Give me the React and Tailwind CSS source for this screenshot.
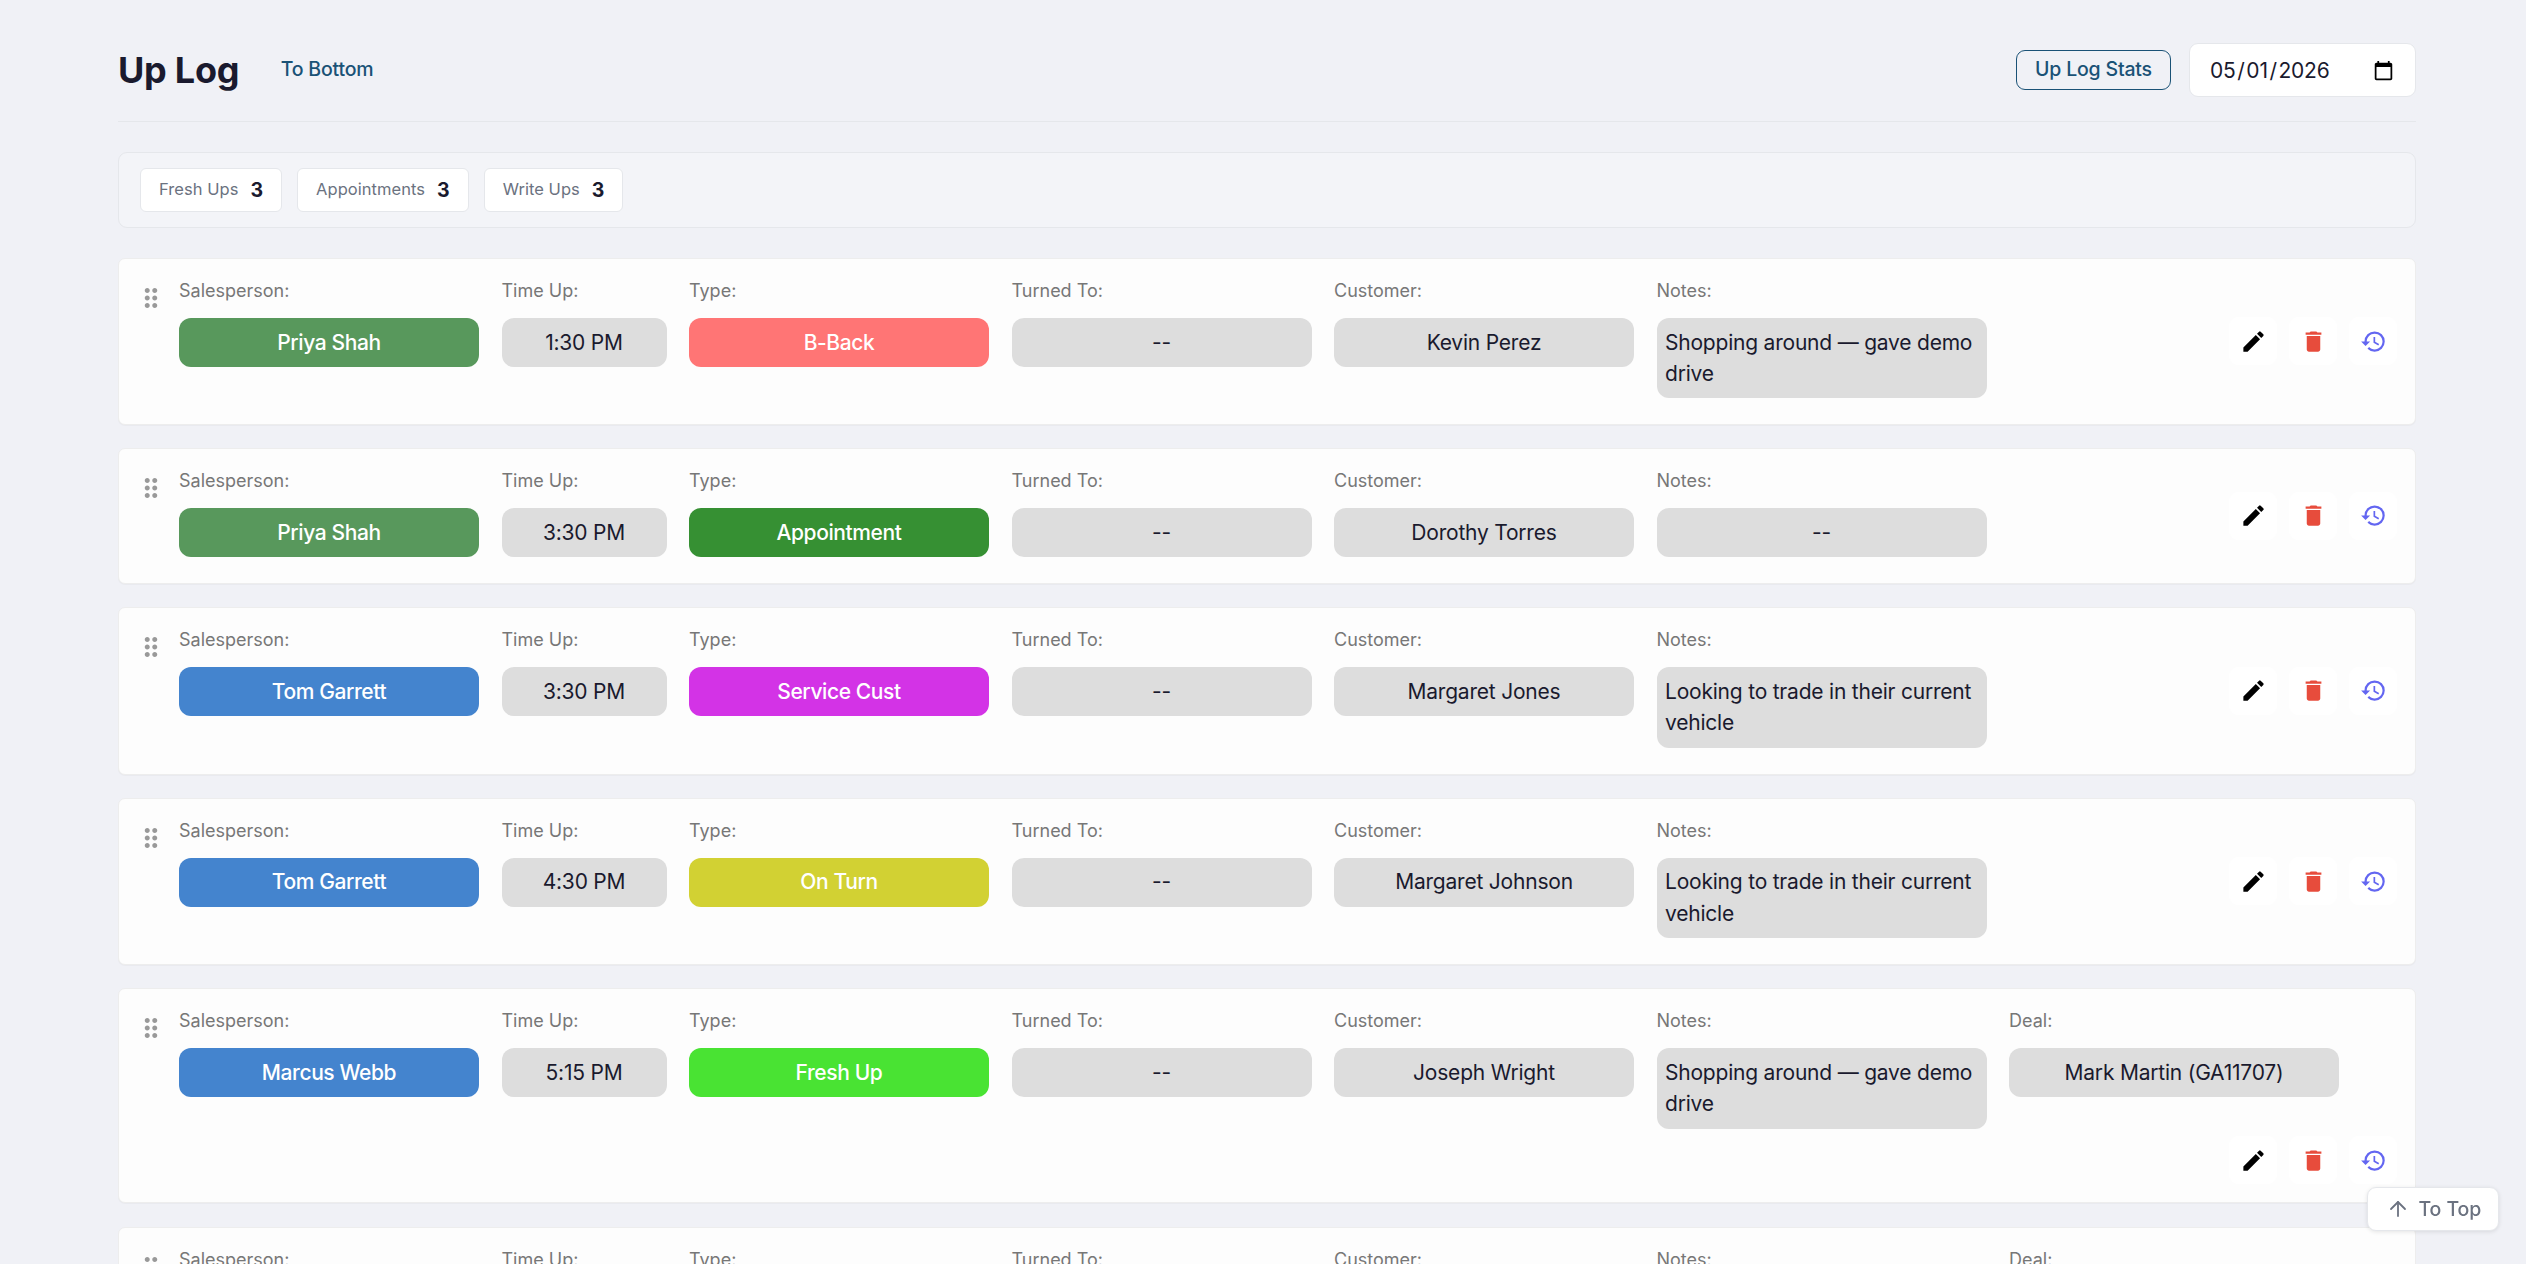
import React from "react";
import { MdDelete, MdDragIndicator, MdEdit, MdHistory } from "react-icons/md";
import { ArrowUp } from "lucide-react";

const stats = [
  { label: "Fresh Ups", value: 3 },
  { label: "Appointments", value: 3 },
  { label: "Write Ups", value: 3 },
];

const GREEN = "bg-[#58985c] text-white font-medium tracking-[-0.019em]";
const BLUE = "bg-[#4484ce] text-white font-medium tracking-[-0.019em]";
const GRAY = "bg-[#dddddd] tracking-[-0.01em]";

const entries = [
  { person: "Priya Shah", personTone: GREEN, time: "1:30 PM", type: "B-Back", typeTone: "bg-[#ff7575]", customer: "Kevin Perez", notes: "Shopping around — gave demo drive" },
  { person: "Priya Shah", personTone: GREEN, time: "3:30 PM", type: "Appointment", typeTone: "bg-[#369033]", customer: "Dorothy Torres", notes: "--" },
  { person: "Tom Garrett", personTone: BLUE, time: "3:30 PM", type: "Service Cust", typeTone: "bg-[#d333e6]", customer: "Margaret Jones", notes: "Looking to trade in their current vehicle" },
  { person: "Tom Garrett", personTone: BLUE, time: "4:30 PM", type: "On Turn", typeTone: "bg-[#d2d133]", customer: "Margaret Johnson", notes: "Looking to trade in their current vehicle" },
  { person: "Marcus Webb", personTone: BLUE, time: "5:15 PM", type: "Fresh Up", typeTone: "bg-[#49e333]", customer: "Joseph Wright", notes: "Shopping around — gave demo drive", deal: "Mark Martin (GA11707)" },
  { person: "--", personTone: GRAY, time: "--", type: "--", typeTone: "bg-[#dddddd]", customer: "--", notes: "--", deal: "--" },
];

function Field({ label, width = "w-[300px]", tone = GRAY, align = "text-center", children }) {
  return (
    <div className={`${width} shrink-0 pb-[7.7px]`}>
      <div className="text-[18px] leading-[27px] text-[#777777]">{label}</div>
      <div className={`mt-[14px] rounded-[12px] px-[8.5px] pt-[8.65px] pb-[8.85px] text-[21px] leading-[31.5px] ${align} ${tone}`}>
        {children}
      </div>
    </div>
  );
}

function IconButton({ label, children }) {
  return (
    <button aria-label={label} className="flex size-12 items-center justify-center rounded-[9px] bg-white">
      {children}
    </button>
  );
}

function EntryCard({ entry }) {
  return (
    <div className="flex rounded-[7px] border border-[#ededed] bg-[#fdfdfd] py-[18px] pr-[18px] pl-[17px] shadow-[0_1px_1px_rgba(0,0,0,0.03)]">
      <div className="w-[43px] shrink-0 pt-[6px]">
        <MdDragIndicator className="size-[30px] text-[#999999]" />
      </div>
      <div className="flex grow flex-wrap items-start gap-x-[22.5px]">
        <Field label="Salesperson:" tone={entry.personTone}>{entry.person}</Field>
        <Field label="Time Up:" width="w-[165px]">{entry.time}</Field>
        <Field label="Type:" tone={`${entry.typeTone} text-white font-medium tracking-[-0.019em]`}>{entry.type}</Field>
        <Field label="Turned To:">--</Field>
        <Field label="Customer:">{entry.customer}</Field>
        <Field label="Notes:" width="w-[330px]" align={entry.notes === "--" ? "text-center" : "text-left"}>{entry.notes}</Field>
        {entry.deal && <Field label="Deal:" width="w-[330px]">{entry.deal}</Field>}
        <div className="-mt-[0.3px] mb-[0.3px] ml-auto flex gap-3 self-center">
          <IconButton label="Edit"><MdEdit className="size-[27px] text-black" /></IconButton>
          <IconButton label="Delete"><MdDelete className="size-[27px] text-[#e74c3c]" /></IconButton>
          <IconButton label="History"><MdHistory className="size-[27px] text-[#6366f1]" /></IconButton>
        </div>
      </div>
    </div>
  );
}

export default function App() {
  return (
    <div className="h-screen overflow-hidden bg-[#f0f1f6] pt-[43px] pr-[110px] pl-[118px] font-['Inter',sans-serif] text-[#1a1a2e]">
      <header className="flex h-[79px] items-start justify-between border-b border-[#e5e7eb]">
        <div className="flex h-[54px] items-center">
          <h1 className="text-[36px] leading-[54px] font-bold tracking-[-0.007em]">Up Log</h1>
          <a className="-mt-[1px] ml-[41.5px] text-[19.5px] font-medium tracking-[-0.01em] text-[#1a5276]">To Bottom</a>
        </div>
        <div className="flex h-[54px] items-center gap-[18px]">
          <button className="h-10 w-[155px] rounded-[9px] border border-[#1a5276] pb-[2px] text-[19.5px] leading-[34px] font-medium tracking-[-0.01em] text-[#1a5276]">
            Up Log Stats
          </button>
          <div className="flex h-[54px] w-[227px] items-center justify-between rounded-[9px] border border-[#e5e7eb] bg-white pr-[21px] pl-[20px] text-[21px] tracking-[-0.01em]">
            <span className="flex pt-[2px]">
              <span>05</span><span className="px-[1.7px]">/</span><span>01</span><span className="px-[1.7px]">/</span><span>2026</span>
            </span>
            <svg viewBox="0 0 24 24" className="size-[21px] text-black" fill="currentColor">
              <path d="M20 3h-1V1h-2v2H7V1H5v2H4c-1.1 0-2 .9-2 2v16c0 1.1.9 2 2 2h16c1.1 0 2-.9 2-2V5c0-1.1-.9-2-2-2zm0 18H4V8h16v13z" />
            </svg>
          </div>
        </div>
      </header>

      <section className="mt-[30px] flex h-[76px] items-center gap-[15px] rounded-[9px] border border-[#e5e7eb] bg-[#f3f4f8] px-[21px]">
        {stats.map((stat) => (
          <div key={stat.label} className="flex h-[44px] items-center gap-3 rounded-[6px] border border-[#e5e7eb] bg-white px-[18px]">
            <span className="pb-[1px] text-[16.5px] tracking-[0.003em] text-[#6b7280]">{stat.label}</span>
            <span className="pt-[1px] text-[19.5px] font-bold">{stat.value}</span>
          </div>
        ))}
      </section>

      <main className="mt-[30px] flex flex-col gap-[23.25px]">
        {entries.map((entry, i) => (
          <EntryCard key={i} entry={entry} />
        ))}
      </main>

      <button className="fixed top-[1187px] right-[27px] flex h-[44px] w-[132px] items-center gap-[8.5px] rounded-[9px] border border-[#e5e7eb] bg-white pl-[18px] text-[19.5px] font-medium tracking-[-0.005em] text-[#6b7280] shadow-[0_1px_4px_rgba(0,0,0,0.1)]">
        <ArrowUp className="size-[24px]" strokeWidth={1.8} />
        <span className="pt-[1px]">To Top</span>
      </button>
    </div>
  );
}
